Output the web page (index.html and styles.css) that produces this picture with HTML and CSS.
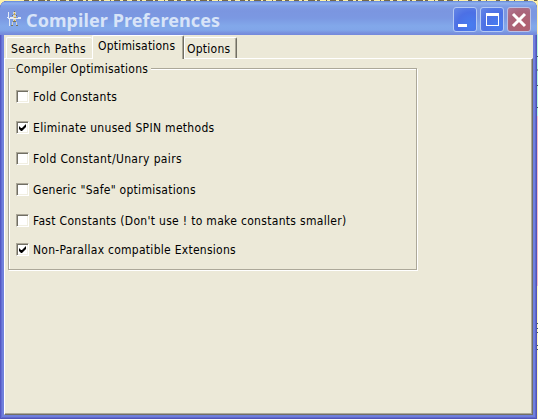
FILE: index.html
```html
<!DOCTYPE html>
<html lang="en">
<head>
<meta charset="utf-8">
<title>Compiler Preferences</title>
<link rel="stylesheet" href="styles.css">
</head>
<body>
<svg class="backdrop" width="538" height="419" aria-hidden="true">
  <rect width="538" height="6" fill="#fff3a8"/>
  <path d="M24 .5H450" stroke="#746849" stroke-dasharray="5 3 2 4 7 2 3 6 1 3 6 3 4 5"/>
  <path d="M450 .5H538" stroke="#746849" stroke-dasharray="3 5 1 9 4 6"/>
  <rect x="537" y="6" width="1" height="28" fill="#fff0b0"/>
  <rect x="537" y="34" width="1" height="82" fill="#b8f5e0"/>
  <rect x="537" y="116" width="1" height="170" fill="#f2bccb"/>
  <rect x="537" y="286" width="1" height="133" fill="#fff4c4"/>
  <path d="M537 56.500h1M537 70h1M537 85.500h1M537 107.500h1M537 323.500h1M537 328.500h1M537 332.500h1M537 345.500h1M537 349.500h1" stroke="#445858"/>
</svg>
<main class="window">
  <header class="titlebar">
    <svg class="app-icon" width="16" height="17" viewBox="0 0 16 17" shape-rendering="crispEdges">
      <path d="M2 1h1v6H2zM3 8h1v7H3zM1 6h2v1H1zM2 7h13v1H2zM12 6h3v1h-3zM4 6h3v1H4z" fill="#e4ebf8"/>
      <path d="M7 1h3v2H7zM7 4h3v3H7zM7 8h3v2H7zM6 11h1v4H6zM10 11h1v4h-1z" fill="#d4d4c8"/>
      <path d="M8 0h1v1H8zM6 4h1v1H6zM10 4h1v1h-1zM7 10h3v1H7zM5 14h2v1H5zM10 14h2v1h-2z" fill="#77755f"/>
      <path d="M8 2h1v2H8zM8 6h2v1H8zM8 9h1v1H8z" fill="#d6a83c"/>
    </svg>
    <h1>Compiler Preferences</h1>
    <div class="controls">
      <button class="control" aria-label="Minimize"><svg width="24" height="25"><path d="M5 17h9v3H5z" fill="#fff"/></svg></button>
      <button class="control" aria-label="Maximize"><svg width="24" height="25"><path fill-rule="evenodd" d="M6 6h13v13H6zM7 9v9h11V9z" fill="#fff"/></svg></button>
      <button class="control close" aria-label="Close"><svg width="24" height="25"><path d="M6 7l12 12M18 7L6 19" stroke="#fff" stroke-width="3"/></svg></button>
    </div>
  </header>
  <section class="client">
    <nav class="tabs">
      <a class="tab search"><span>Search Paths</span></a>
      <a class="tab active"><span>Optimisations</span></a>
      <a class="tab options"><span>Options</span></a>
    </nav>
    <div class="page">
      <div class="group">
        <h2><span>Compiler Optimisations</span></h2>
        <label class="option"><i class="box"></i><span>Fold Constants</span></label>
        <label class="option"><i class="box"><svg width="7" height="7"><path d="M0 2v3l2 2h1l4-4V0L3 4H2z"/></svg></i><span>Eliminate unused SPIN methods</span></label>
        <label class="option"><i class="box"></i><span class="wide">Fold Constant/Unary pairs</span></label>
        <label class="option"><i class="box"></i><span class="narrow">Generic "Safe" optimisations</span></label>
        <label class="option"><i class="box"></i><span>Fast Constants (Don't use ! to make constants smaller)</span></label>
        <label class="option last"><i class="box"><svg width="7" height="7"><path d="M0 2v3l2 2h1l4-4V0L3 4H2z"/></svg></i><span class="narrow">Non-Parallax compatible Extensions</span></label>
      </div>
    </div>
  </section>
</main>
</body>
</html>
```
FILE: styles.css
```css
* { box-sizing: border-box; }
body {
  margin: 0;
  height: 419px;
  overflow: hidden;
  font: 12px/16px "DejaVu Sans Condensed", "DejaVu Sans", sans-serif;
  font-stretch: condensed;
  color: #000;
}
.backdrop { position: absolute; top: 0; left: 0; z-index: -1; }
.window {
  width: 537px;
  height: 418px;
  margin-top: 1px;
  padding: 0 4px 4px;
  border-radius: 7px 7px 0 0;
  background: #7080dc;
  box-shadow: inset 1px 0 #5458c4, inset -1px -1px #5055b8, inset 2px 0 #646fd4, inset -2px -2px #6068cc;
}
.titlebar {
  display: flex;
  height: 34px;
  margin: 0 -4px;
  padding: 6px 6px 0;
  border-radius: 7px 7px 0 0;
  background: linear-gradient(#6285d8 0, #90b2ee 2px, #7f9ee5 5px, #7b96e0 10px, #7b98e2 17px, #82a8ea 25px, #81a6e9 29px, #7891de 32px, #7488dc 34px);
}
.app-icon { margin-top: 4px; }
h1 {
  margin: 0 0 0 4px;
  font: bold 18px/26px "Noto Sans", sans-serif;
  letter-spacing: .08px;
  color: #d8e4f8;
  white-space: nowrap;
}
.controls { display: flex; gap: 3px; margin-left: auto; }
.control {
  width: 24px;
  height: 25px;
  padding: 0;
  border: 1px solid #b4c9f4;
  border-radius: 3px;
  background: radial-gradient(circle at 75% 75%, #477df0, #4c70e5 55%, #6688e6);
}
.control svg { display: block; margin: -1px; }
.control.close { background: radial-gradient(circle at 70% 75%, #b2606e, #a9657b 60%, #b17a98); border-color: #bac0e5; }
.client { height: 380px; background: #ece9d8; }
.tabs { display: flex; height: 23px; padding-left: 2px; align-items: flex-end; }
.tab {
  height: 21px;
  border: solid #fff;
  border-width: 1px 0 0 1px;
  border-radius: 2px 2px 0 0;
  white-space: nowrap;
}
.search { width: 86px; padding: 3px 0 0 4px; letter-spacing: .45px; }
.active {
  position: relative;
  z-index: 1;
  width: 92px;
  height: 24px;
  margin-bottom: -1px;
  padding: 2px 0 0 5px;
  border-right: 1px solid #716f64;
  background: #ece9d8;
  box-shadow: inset -1px 0 #aca899;
  letter-spacing: .2px;
}
.options { width: 53px; padding: 3px 0 0 2px; border-right: 1px solid #716f64; box-shadow: inset -1px 0 #aca899; letter-spacing: .25px; }
.page {
  height: 357px;
  padding: 9px 0 0 3px;
  border: 1px solid;
  border-color: #fff #716f64 #716f64 #fff;
  box-shadow: inset -1px -1px #aca899;
}
.group {
  display: flex;
  flex-direction: column;
  width: 409px;
  height: 202px;
  padding-left: 7px;
  border: 1px solid #aca899;
  box-shadow: inset 1px 1px #fff, 1px 1px #fff;
}
h2 { margin: -8px 0 3px -1px; height: 17px; font: inherit; letter-spacing: .25px; }
h2 span { display: inline-block; padding: 0 3px 0 1px; background: #ece9d8; }
.option { display: flex; height: 31px; align-items: center; letter-spacing: .31px; }
.option.last { margin-top: -2px; }
.wide { letter-spacing: .36px; }
.narrow { letter-spacing: .27px; }
.box {
  display: grid;
  place-items: center;
  width: 13px;
  height: 13px;
  margin-right: 4px;
  border: 1px solid;
  border-color: #aca899 #fff #fff #aca899;
  background: #fff;
  box-shadow: inset 1px 1px #716f64, inset -1px -1px #f1efe2;
}
span { white-space: nowrap; }
```
